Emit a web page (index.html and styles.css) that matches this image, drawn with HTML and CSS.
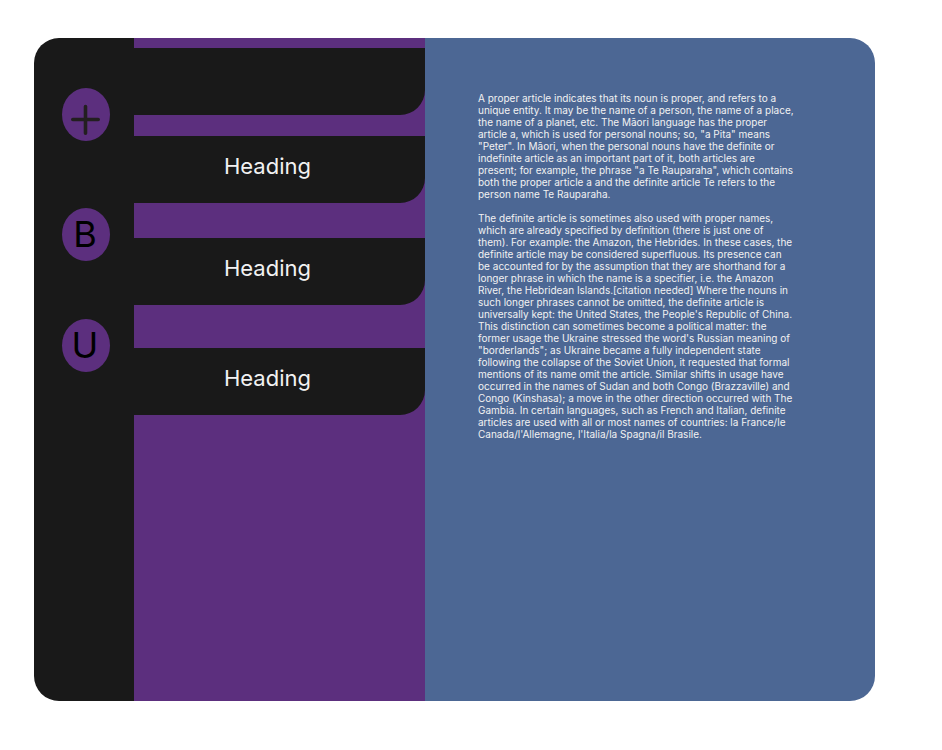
FILE: index.html
```html
<!DOCTYPE html>
<html lang="en">
<head>
  <meta charset="utf-8">
  <meta name="viewport" content="width=device-width, initial-scale=1">
  <title>Notes</title>
  <link rel="stylesheet" href="styles.css">
</head>
<body>
  <div class="app">
    <div class="rail">
      <button class="tool tool-add" type="button">
        <svg class="plus" viewBox="0 0 30 32" aria-hidden="true">
          <path d="M2.8 15.5H28.2M15.5 2.5V29.2" />
        </svg>
      </button>
      <button class="tool tool-bold" type="button">B</button>
      <button class="tool" type="button">U</button>
    </div>
    <nav class="notes">
      <button class="note" type="button"></button>
      <button class="note note-first" type="button">Heading</button>
      <button class="note note-second" type="button">Heading</button>
      <button class="note note-third" type="button">Heading</button>
    </nav>
    <main class="article">
      <p>A proper article indicates that its noun is proper, and refers to a unique entity. It may be the name of a person, the name of a place, the name of a planet, etc. The Māori language has the proper article a, which is used for personal nouns; so, "a Pita" means "Peter". In Māori, when the personal nouns have the definite or indefinite article as an important part of it, both articles are present; for example, the phrase "a Te Rauparaha", which contains both the proper article a and the definite article Te refers to the person name Te Rauparaha.</p>
      <p>The definite article is sometimes also used with proper names, which are already specified by definition (there is just one of them). For example: the Amazon, the Hebrides. In these cases, the definite article may be considered superfluous. Its presence can be accounted for by the assumption that they are shorthand for a longer phrase in which the name is a specifier, i.e. the Amazon River, the Hebridean Islands.[citation needed] Where the nouns in such longer phrases cannot be omitted, the definite article is universally kept: the United States, the People's Republic of China. This distinction can sometimes become a political matter: the former usage the Ukraine stressed the word's Russian meaning of "borderlands"; as Ukraine became a fully independent state following the collapse of the Soviet Union, it requested that formal mentions of its name omit the article. Similar shifts in usage have occurred in the names of Sudan and both Congo (Brazzaville) and Congo (Kinshasa); a move in the other direction occurred with The Gambia. In certain languages, such as French and Italian, definite articles are used with all or most names of countries: la France/le Canada/l'Allemagne, l'Italia/la Spagna/il Brasile.</p>
    </main>
  </div>
</body>
</html>
```
FILE: styles.css
```css
* {
  box-sizing: border-box;
}

body {
  display: flex;
  min-height: 100vh;
  margin: 0;
  padding: 38px 67px 49px 34px;
  background: #ffffff;
  font-family: Inter, "Liberation Sans", sans-serif;
}

button {
  padding: 0;
  border: 0;
  font: inherit;
  cursor: pointer;
}

.app {
  display: grid;
  flex: 1;
  grid-template-columns: 100px 291px 1fr;
  overflow: hidden;
  border-radius: 25px;
}

.rail {
  display: flex;
  flex-direction: column;
  align-items: center;
  padding: 50px 0 0 4px;
  background: #191919;
}

.tool {
  display: flex;
  align-items: center;
  justify-content: center;
  width: 48px;
  height: 53px;
  padding: 0 2px 2px 0;
  border-radius: 50%;
  background: #5c2f7e;
  color: #000000;
  font-size: 36px;
  line-height: 44px;
}

.tool-add {
  align-items: flex-end;
  padding-bottom: 5px;
  margin-bottom: 67px;
}

.tool-bold {
  margin-bottom: 58px;
}

.plus {
  width: 30px;
  height: 32px;
  fill: none;
  stroke: #231f20;
  stroke-width: 3.6;
  stroke-linecap: round;
}

.notes {
  display: flex;
  flex-direction: column;
  padding-top: 10px;
  background: #5c2f7e;
}

.note {
  height: 67px;
  padding: 0 24px 6px 0;
  border-radius: 0 0 25px 0;
  background: #191919;
  color: #f2f2f2;
  font-size: 22px;
  line-height: 27px;
}

.note-first {
  margin-top: 21px;
}

.note-second {
  margin-top: 35px;
}

.note-third {
  margin-top: 43px;
}

.article {
  padding: 54px 53px;
  background: #4c6794;
  color: #f2f2f2;
  font-size: 10px;
  line-height: 12px;
}

.article p {
  max-width: 318px;
  margin: 0 0 12px;
}
```
